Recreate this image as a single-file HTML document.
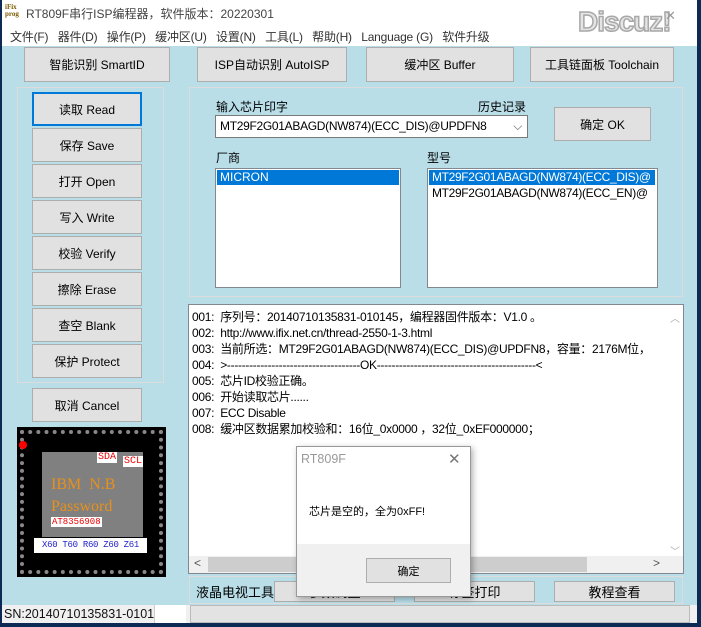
<!DOCTYPE html>
<html><head><meta charset="utf-8"><style>
*{box-sizing:border-box;margin:0;padding:0}
body{width:701px;height:627px;overflow:hidden;background:#0d2a55;font-family:"Liberation Sans","Noto Sans CJK SC",sans-serif;font-size:12px;color:#000;position:relative}
.a{position:absolute}
.btn{position:absolute;background:#e1e1e1;border:1px solid #adadad;display:flex;align-items:center;justify-content:center;font-size:12px;white-space:nowrap}
.grp{position:absolute;border:1px solid #dcdcdc}
.list{position:absolute;background:#fff;border:1px solid #828790}
</style></head><body>
<div class="a" style="left:2px;top:0;width:695px;height:623px;background:#b9dee8"></div>
<div class="a" style="left:2px;top:0;width:695px;height:46px;background:#fff"></div>
<div class="a" style="left:5px;top:4px;font:bold 7px 'Liberation Serif',serif;line-height:7px;color:#7a5a00">iFix<br>prog</div>
<div class="a" style="left:26px;top:5px;font-size:12px;color:#444">RT809F串行ISP编程器，软件版本：20220301</div>
<div class="a" style="left:10px;top:28px;font-size:12px;color:#333;white-space:nowrap;letter-spacing:-0.2px">文件(F)&nbsp;&nbsp; 器件(D)&nbsp;&nbsp; 操作(P)&nbsp;&nbsp; 缓冲区(U)&nbsp;&nbsp; 设置(N)&nbsp;&nbsp; 工具(L)&nbsp;&nbsp; 帮助(H)&nbsp;&nbsp; Language (G)&nbsp;&nbsp; 软件升级</div>
<div class="a" style="left:578px;top:6px;font:bold 28px 'Liberation Sans',sans-serif;color:#e4e4e4;-webkit-text-stroke:1.5px #a8a8a8;letter-spacing:-1px">Discuz!</div>
<div class="a" style="left:665px;top:8px;font-size:13px;color:#999">✕</div>

<div class="btn" style="left:24px;top:47px;width:146px;height:35px">智能识别 SmartID</div>
<div class="btn" style="left:197px;top:47px;width:150px;height:35px">ISP自动识别 AutoISP</div>
<div class="btn" style="left:366px;top:47px;width:148px;height:35px">缓冲区 Buffer</div>
<div class="btn" style="left:530px;top:47px;width:144px;height:35px">工具链面板 Toolchain</div>

<div class="grp" style="left:17px;top:87px;width:147px;height:296px"></div>
<div class="btn" style="left:32px;top:92px;width:110px;height:34px;border:2px solid #0078d7">读取 Read</div>
<div class="btn" style="left:32px;top:128px;width:110px;height:34px">保存 Save</div>
<div class="btn" style="left:32px;top:164px;width:110px;height:34px">打开 Open</div>
<div class="btn" style="left:32px;top:200px;width:110px;height:34px">写入 Write</div>
<div class="btn" style="left:32px;top:236px;width:110px;height:34px">校验 Verify</div>
<div class="btn" style="left:32px;top:272px;width:110px;height:34px">擦除 Erase</div>
<div class="btn" style="left:32px;top:308px;width:110px;height:34px">查空 Blank</div>
<div class="btn" style="left:32px;top:344px;width:110px;height:34px">保护 Protect</div>
<div class="btn" style="left:32px;top:388px;width:110px;height:34px">取消 Cancel</div>

<div class="a" style="left:17px;top:427px;width:149px;height:150px;background:#000"></div>
<div class="a" style="left:20px;top:430px;width:143px;height:144px;border:4px dotted #888"></div>
<div class="a" style="left:19px;top:441px;width:8px;height:8px;border-radius:50%;background:#f00"></div>
<div class="a" style="left:42px;top:452px;width:101px;height:85px;background:#808080"></div>
<div class="a" style="left:97px;top:452px;background:#fff;color:#e00;font:10px 'Liberation Mono',monospace;padding:0 1px">SDA</div>
<div class="a" style="left:123px;top:456px;background:#fff;color:#e00;font:10px 'Liberation Mono',monospace;padding:0 1px">SCL</div>
<div class="a" style="left:51px;top:474px;color:#e8901a;font:16px 'Liberation Serif',serif;line-height:22px;white-space:nowrap">IBM&nbsp; N.B<br>Password</div>
<div class="a" style="left:51px;top:517px;background:#fff;color:#e00;font:9px 'Liberation Mono',monospace;padding:0 1px">AT8356908</div>
<div class="a" style="left:34px;top:538px;width:113px;height:15px;background:#fff;color:#22c;font:9px 'Liberation Mono',monospace;line-height:15px;text-align:center;white-space:nowrap;letter-spacing:-0.3px">X60 T60 R60 Z60 Z61</div>

<div class="grp" style="left:189px;top:87px;width:494px;height:210px"></div>
<div class="a" style="left:216px;top:98px;font-size:12px">输入芯片印字</div>
<div class="a" style="left:478px;top:98px;font-size:12px">历史记录</div>
<div class="a" style="left:215px;top:115px;width:313px;height:23px;background:#fff;border:1px solid #7a7a7a;font-size:12px;line-height:21px;padding-left:4px;white-space:nowrap;letter-spacing:-0.3px">MT29F2G01ABAGD(NW874)(ECC_DIS)@UPDFN8<span style="position:absolute;right:5px;top:0;color:#555;background:#fff">⌵</span></div>
<div class="btn" style="left:554px;top:107px;width:97px;height:34px">确定 OK</div>
<div class="a" style="left:216px;top:149px;font-size:12px">厂商</div>
<div class="a" style="left:427px;top:149px;font-size:12px">型号</div>
<div class="list" style="left:215px;top:168px;width:186px;height:120px"><div style="margin:1px;background:#0078d7;color:#fff;font-size:12px;padding-left:3px;height:15px;line-height:15px">MICRON</div></div>
<div class="list" style="left:427px;top:168px;width:231px;height:120px;overflow:hidden;font-size:12px;white-space:nowrap;line-height:15px;letter-spacing:-0.35px"><div style="margin:1px;background:#0078d7;color:#fff;padding-left:3px;width:226px;overflow:hidden">MT29F2G01ABAGD(NW874)(ECC_DIS)@</div><div style="padding-left:4px">MT29F2G01ABAGD(NW874)(ECC_EN)@</div></div>

<div class="a" style="left:188px;top:304px;width:496px;height:270px;background:#fff;border:1px solid #828790"></div>
<div class="a" style="left:192px;top:309px;width:474px;overflow:hidden;font-size:12px;line-height:16px;white-space:nowrap;letter-spacing:-0.3px">001:&nbsp; 序列号：20140710135831-010145，编程器固件版本：V1.0 。<br>002:&nbsp; http://www.ifix.net.cn/thread-2550-1-3.html<br>003:&nbsp; 当前所选：MT29F2G01ABAGD(NW874)(ECC_DIS)@UPDFN8，容量：2176M位，<br>004:&nbsp; &gt;------------------------------------OK-------------------------------------------&lt;<br>005:&nbsp; 芯片ID校验正确。<br>006:&nbsp; 开始读取芯片......<br>007:&nbsp; ECC Disable<br>008:&nbsp; 缓冲区数据累加校验和：16位_0x0000 ，32位_0xEF000000；</div>
<div class="a" style="left:666px;top:305px;width:17px;height:251px;background:#fff"></div>
<div class="a" style="left:670px;top:310px;color:#aaa;font-size:10px">︿</div>
<div class="a" style="left:670px;top:543px;color:#aaa;font-size:10px">﹀</div>
<div class="a" style="left:189px;top:556px;width:494px;height:17px;background:#f0f0f0"></div>
<div class="a" style="left:208px;top:557px;width:379px;height:15px;background:#cdcdcd"></div>
<div class="a" style="left:194px;top:556px;font-size:12px;color:#555">&lt;</div>
<div class="a" style="left:653px;top:556px;font-size:12px;color:#555">&gt;</div>

<div class="grp" style="left:189px;top:576px;width:494px;height:28px"></div>
<div class="a" style="left:196px;top:582px;font-size:13px">液晶电视工具</div>
<div class="btn" style="left:274px;top:581px;width:121px;height:21px;font-size:13px">参数调整</div>
<div class="btn" style="left:414px;top:581px;width:121px;height:21px;font-size:13px">标签打印</div>
<div class="btn" style="left:554px;top:581px;width:121px;height:21px;font-size:13px">教程查看</div>

<div class="a" style="left:2px;top:605px;width:695px;height:18px;background:#f0f0f0"></div>
<div class="a" style="left:4px;top:607px;font-size:12.5px;color:#111">SN:20140710135831-0101</div>
<div class="a" style="left:154px;top:605px;width:32px;height:18px;background:#fff;border-left:1px solid #ccc"></div>
<div class="a" style="left:190px;top:605px;width:500px;height:18px;background:#e3e3e3;border:1px solid #bbb"></div>

<div class="a" style="left:296px;top:446px;width:175px;height:151px;background:#fff;border:1px solid #999;box-shadow:2px 2px 6px rgba(0,0,0,.3)">
<div class="a" style="left:4px;top:5px;font-size:12.5px;color:#999">RT809F</div>
<div class="a" style="left:151px;top:3px;font-size:15px;color:#777">✕</div>
<div class="a" style="left:12px;top:56px;font-size:11px">芯片是空的，全为0xFF!</div>
<div class="a" style="left:0;top:97px;width:173px;height:52px;background:#f0f0f0"></div>
<div class="btn" style="left:69px;top:111px;width:85px;height:25px;font-size:11px">确定</div>
</div>
</body></html>
